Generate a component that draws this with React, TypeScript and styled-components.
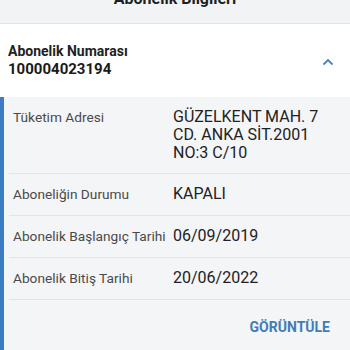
import React from 'react'
import styled, { createGlobalStyle } from 'styled-components'

const GlobalStyle = createGlobalStyle`
  * { box-sizing: border-box; }
  html, body { margin: 0; padding: 0; background: #ffffff; }
  body { font-family: Roboto, "Noto Sans", sans-serif; }
`

type Detail = { label: string; value: string[] }

const details: Detail[] = [
  { label: 'Tüketim Adresi', value: ['GÜZELKENT MAH. 7', 'CD. ANKA SİT.2001', 'NO:3 C/10'] },
  { label: 'Aboneliğin Durumu', value: ['KAPALI'] },
  { label: 'Abonelik Başlangıç Tarihi', value: ['06/09/2019'] },
  { label: 'Abonelik Bitiş Tarihi', value: ['20/06/2022'] },
]

export default function App() {
  return (
    <>
      <GlobalStyle />
      <Page>
        <TopBar>
          <Title>Abonelik Bilgileri</Title>
        </TopBar>
        <SubHeader>
          <div>
            <SubLabel>Abonelik Numarası</SubLabel>
            <SubNumber>100004023194</SubNumber>
          </div>
          <ChevronUp width="12" height="8" viewBox="0 0 12 8">
            <path d="M1.5 6.5 L6 2 L10.5 6.5" fill="none" stroke="#4d80b8" strokeWidth="1.8" />
          </ChevronUp>
        </SubHeader>
        <Panel>
          {details.map((d) => (
            <Row key={d.label}>
              <Label>{d.label}</Label>
              <Value>
                {d.value.map((line) => (
                  <div key={line}>{line}</div>
                ))}
              </Value>
            </Row>
          ))}
          <Actions>
            <ViewButton>GÖRÜNTÜLE</ViewButton>
          </Actions>
        </Panel>
      </Page>
    </>
  )
}

const Page = styled.div`
  width: 350px;
  height: 350px;
  overflow: hidden;
  display: flex;
  flex-direction: column;
`

const TopBar = styled.header`
  height: 24px;
  flex-shrink: 0;
  background: #f2f3f5;
  border-bottom: 1px solid #e2e4e7;
  display: flex;
  justify-content: center;
  align-items: flex-end;
  overflow: hidden;
`

const Title = styled.h1`
  margin: 0 0 15px 0;
  font-size: 16px;
  line-height: 18px;
  font-weight: 700;
  color: #1f1f1f;
`

const SubHeader = styled.section`
  height: 73px;
  flex-shrink: 0;
  padding: 0 16px 0 8px;
  display: flex;
  align-items: center;
  justify-content: space-between;
`

const SubLabel = styled.div`
  font-size: 14px;
  line-height: 17px;
  font-weight: 700;
  color: #222;
`

const SubNumber = styled.div`
  font-size: 15px;
  line-height: 18px;
  font-weight: 700;
  color: #1a1a1a;
`

const ChevronUp = styled.svg`
  margin-top: 2px;
`

const Panel = styled.section`
  flex: 1;
  background: #f4f5f7;
  border-left: 4px solid #3a7dc2;
  padding-left: 5px;
`

const Row = styled.div`
  display: grid;
  grid-template-columns: 160px 1fr;
  padding: 10px 0 11px 4px;
  border-bottom: 1px solid #e3e5e8;
`

const Label = styled.div`
  font-size: 13.7px;
  line-height: 20px;
  color: #4a4a4a;
  white-space: nowrap;
`

const Value = styled.div`
  font-size: 16px;
  line-height: 18px;
  padding-top: 1px;
  color: #222;
`

const Actions = styled.div`
  display: flex;
  justify-content: flex-end;
  padding: 19px 20px 0 0;
`

const ViewButton = styled.button`
  border: none;
  background: none;
  padding: 0;
  font-family: inherit;
  font-size: 14px;
  font-weight: 700;
  color: #3f7cb8;
  cursor: pointer;
`
